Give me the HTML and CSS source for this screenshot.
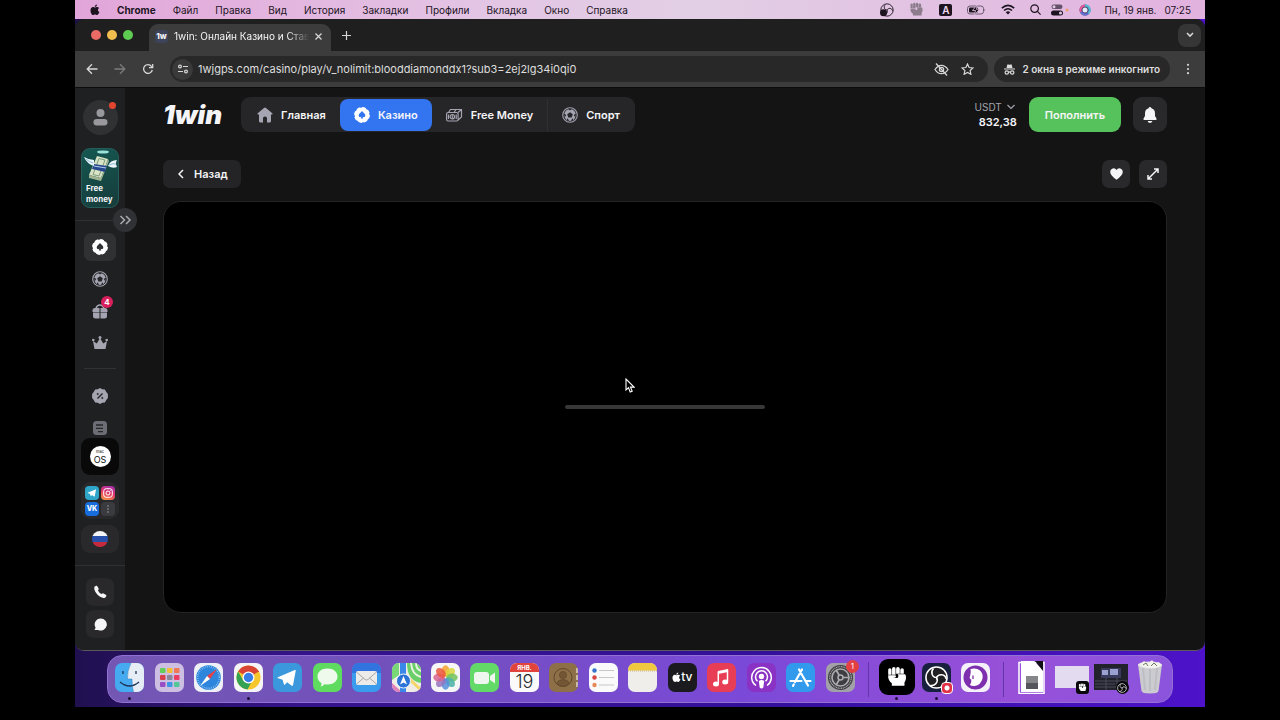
FILE: index.html
```html
<!doctype html>
<html lang="ru">
	<head>
		<meta charset="UTF-8" />
		<meta name="viewport" content="width=device-width, initial-scale=1.0" />
		<title>1win: Онлайн Казино и Ставки</title>
		<link rel="stylesheet" href="styles.css">
	</head>
	<body>
		<!-- Shared icons -->
		<svg class="sprite" aria-hidden="true">
			<symbol id="apple" viewBox="0 0 16 18">
				<path d="M11.2 0.3c.1 2-1.600 3.700-3.500 3.700C7.500 2.200 9.300.500 11.200.300zM8 5c.8 0 1.700-.9 3.300-.9 1.300 0 2.500.7 3.200 1.700-2.700 1.600-2.300 5.300.5 6.500-.7 2-2.200 4.700-3.900 4.700-1.200 0-1.600-.8-3-.8s-1.900.8-3 .8C2.900 17 .6 12.900.8 9.200 1 6.100 2.900 4.200 5 4.200 6.300 4.200 7.200 5 8 5z" />
			</symbol>
			<symbol id="chip" viewBox="0 0 16 16">
				<path fill-rule="evenodd" d="M8 .6A7.400 7.400 0 1 1 8 15.400 7.400 7.400 0 0 1 8 .6zM8 4c.8 1.700 3.300 2.300 3.300 4.500 0 1.600-1.600 2.200-2.700 1.200l.6 1.800H6.800l.6-1.800c-1.100 1-2.700.4-2.700-1.200C4.700 6.300 7.200 5.700 8 4z" />
				<circle cx="8" cy="8" r="7.300" fill="none" stroke="currentColor" stroke-width="1.200" stroke-dasharray="3.700 2.033" />
			</symbol>
			<symbol id="ball" viewBox="0 0 16 16">
				<circle cx="8" cy="8" r="7.300" fill="none" stroke="currentColor" stroke-width="1.100" />
				<circle cx="8" cy="8" r="5.900" />
				<path class="seam" d="M8 5.200l2.800 2-1.100 3.300H6.300L5.200 7.200zM6 1.800h4L8 3.400zM14 6.500l-.6 4-1.700-2.400zM2 6.500l.6 4 1.700-2.400zM4.500 13.500l.8-2.200 2 2.400zM11.500 13.500l-.8-2.200-2 2.400z" />
			</symbol>
			<symbol id="fist" viewBox="0 0 20 20">
				<path d="M2 3.500Q2 2 3.500 2T5 3.500V8H2zM5.500 2.500Q5.500 1 7.100 1t1.600 1.500V8H5.500zM9.200 2.500Q9.200 1 10.800 1t1.700 1.500V7H9.200zM13 3.500Q13 2 14.600 2t1.600 1.500V7H13zM2 8.500h6.200c1.200 0 1.200 1.700 0 1.900l-2 .2 4.200.2c1-.6 1.200-2.300.2-3.300h6.600c1.400 1 1.400 5-.4 7.400V18H5.300v-2.300C3 14.300 1.600 11.500 2 8.500z" />
			</symbol>
			<symbol id="obs" viewBox="0 0 20 20">
				<circle cx="10" cy="10" r="8.800" fill="none" stroke="currentColor" stroke-width="1.300" />
				<path fill="none" stroke="currentColor" stroke-width="1.300" d="M10 10C6 10 5 5 7.500 2.500M10 10c2-3.500 7-3 8 1M10 10c2 3.500-1.500 7.500-5 6.500" />
			</symbol>
			<symbol id="plane" viewBox="0 0 20 20">
				<path d="M18 3.200L15.500 16.300c-.2.800-.8 1-1.500.6l-3.900-3-1.900 1.900c-.4.400-1 .3-1.100-.3L6 11.600 2 10.300c-.8-.3-.8-.9.200-1.300l14.900-6.200c.6-.2 1 0 .9.400zM6.800 11.400l8.300-6-6.900 6.900-.2 2.500z" />
			</symbol>
		</svg>

		<div class="desktop">
			<header class="menubar">
				<nav class="menu" aria-label="Меню">
					<button class="menu-item" aria-label="Apple"><svg width="10" height="12"><use href="#apple" /></svg></button>
					<button class="menu-item bold">Chrome</button>
					<button class="menu-item">Файл</button>
					<button class="menu-item">Правка</button>
					<button class="menu-item">Вид</button>
					<button class="menu-item">История</button>
					<button class="menu-item">Закладки</button>
					<button class="menu-item">Профили</button>
					<button class="menu-item">Вкладка</button>
					<button class="menu-item">Окно</button>
					<button class="menu-item">Справка</button>
				</nav>
				<div class="status">
					<svg width="14" height="14" viewBox="0 0 20 20">
						<use href="#obs" width="20" height="20" />
						<circle cx="5" cy="14" r="5" />
					</svg>
					<svg class="grey" width="15" height="15"><use href="#fist" /></svg>
					<span class="layout">A</span>
					<svg width="19" height="10" viewBox="0 0 19 10">
						<rect x="0.500" y="1" width="16" height="8" rx="2.500" fill="none" stroke="#6b5a70" />
						<rect x="2" y="2.500" width="9" height="5" rx="1" />
						<path d="M17.500 3.500v3q1.500-1.500 0-3z" fill="#6b5a70" />
						<path d="M10 0L5.500 5.500h3L7.500 10l5-5.700h-3z" stroke="#dfc0df" stroke-width="0.800" />
					</svg>
					<svg width="14" height="11" viewBox="0 0 14 11" fill="none" stroke="currentColor" stroke-width="1.600">
						<path d="M.8 4.200Q7-1.600 13.200 4.200M3 6.500q4-3.500 8 0" />
						<path d="M4.800 8.200Q7 6.400 9.200 8.200L7 10.500z" fill="currentColor" stroke="none" />
					</svg>
				</div>
				<div class="status compact">
					<svg width="11" height="11" viewBox="0 0 11 11" fill="none" stroke="currentColor" stroke-width="1.200">
						<circle cx="4.600" cy="4.600" r="3.800" /><path d="M7.400 7.400l3.200 3.200" />
					</svg>
					<svg width="18" height="12" viewBox="0 0 18 12">
						<rect x="0.500" y="0.500" width="11" height="4.500" rx="2.200" fill="#65526a" /><circle cx="3" cy="2.700" r="1.500" fill="#e2c8e4" />
						<rect x="0" y="6.500" width="12" height="5" rx="2.500" /><circle cx="9.500" cy="9" r="1.500" fill="#e2c8e4" />
						<circle cx="16" cy="6" r="1.500" fill="#f0a070" />
					</svg>
					<svg width="12" height="12" viewBox="0 0 12 12" fill="none" stroke-width="2">
						<circle cx="6" cy="6" r="5.500" fill="#4a4370" />
						<path d="M2 8A4.500 4.500 0 0 1 6 1.500" stroke="#e65a9c" />
						<path d="M6 1.500A4.500 4.500 0 0 1 9 9.500" stroke="#4dbdd8" />
						<path d="M9 9.500A4.500 4.500 0 0 1 2 8" stroke="#6570d8" />
						<circle cx="6" cy="6" r="2.500" fill="#e4eafa" />
					</svg>
					<time class="clock"><span>Пн, 19 янв.</span><span>07:25</span></time>
				</div>
			</header>

			<div class="window">
				<div class="tabstrip">
					<div class="lights">
						<button class="light red" aria-label="Закрыть"></button>
						<button class="light yellow" aria-label="Свернуть"></button>
						<button class="light green" aria-label="Развернуть"></button>
					</div>
					<div class="tab">
						<span class="favicon">1w</span>
						<span class="tab-title">1win: Онлайн Казино и Став</span>
						<button class="icon-btn" aria-label="Закрыть вкладку">
							<svg width="7" height="7" viewBox="0 0 7 7" fill="none" stroke="currentColor" stroke-width="1.300"><path d="M.5.500l6 6M6.500.500l-6 6" /></svg>
						</button>
					</div>
					<button class="icon-btn new-tab" aria-label="Новая вкладка">
						<svg width="9" height="9" viewBox="0 0 9 9" fill="none" stroke="currentColor" stroke-width="1.200"><path d="M4.500 0v9M0 4.500h9" /></svg>
					</button>
					<button class="icon-btn tab-search" aria-label="Поиск вкладок">
						<svg width="8" height="6" viewBox="0 0 8 6" fill="none" stroke="currentColor" stroke-width="1.600"><path d="M1 1l3 3 3-3" /></svg>
					</button>
				</div>

				<div class="toolbar">
					<button class="icon-btn" aria-label="Назад">
						<svg width="12" height="12" viewBox="0 0 12 12" fill="none" stroke="currentColor" stroke-width="1.300"><path d="M11.500 6H1.500M6 1.200L1.200 6 6 10.800" /></svg>
					</button>
					<button class="icon-btn faded" aria-label="Вперёд">
						<svg width="12" height="12" viewBox="0 0 12 12" fill="none" stroke="currentColor" stroke-width="1.300"><path d="M.5 6h10M6 1.200L10.800 6 6 10.800" /></svg>
					</button>
					<button class="icon-btn" aria-label="Обновить">
						<svg width="12" height="12" viewBox="0 0 12 12" fill="none" stroke="currentColor" stroke-width="1.300"><path d="M10.300 7A4.400 4.400 0 1 1 9.500 3.300L10.700 4.700M10.700 1v3.700H7" /></svg>
					</button>
					<div class="omnibox">
						<button class="icon-btn site-info" aria-label="Сведения о сайте">
							<svg width="10" height="10" viewBox="0 0 10 10" fill="none" stroke="currentColor" stroke-width="1.200"><circle cx="2" cy="2.500" r="1.400" /><path d="M5 2.500h5M0 7.500h5" /><circle cx="8" cy="7.500" r="1.400" /></svg>
						</button>
						<input class="url" type="text" aria-label="Адрес" value="1wjgps.com/casino/play/v_nolimit:blooddiamonddx1?sub3=2ej2lg34i0qi0" />
						<button class="icon-btn" aria-label="Отслеживание">
							<svg width="15" height="13" viewBox="0 0 15 13" fill="none" stroke="currentColor" stroke-width="1.300"><path d="M1 6.500Q3.700 2.300 7.500 2.300T14 6.500Q11.300 10.700 7.500 10.700T1 6.500z" /><circle cx="7.500" cy="6.500" r="2.100" /><path d="M2 .5l11 12" /></svg>
						</button>
						<button class="icon-btn" aria-label="В закладки">
							<svg width="13" height="12" viewBox="0 0 13 12" fill="none" stroke="currentColor" stroke-width="1.200"><path d="M6.500 1l1.600 3.500 3.900.4-2.900 2.600.8 3.800-3.400-1.900-3.400 1.900.8-3.800L1 4.900l3.900-.4z" /></svg>
						</button>
					</div>
					<button class="incognito">
						<svg width="11" height="11" viewBox="0 0 11 11"><path d="M2.500 4l.8-3.200q.2-.6.800-.4l1.400.3L6.900.400q.6-.2.800.4L8.500 4zM0 4.600h11v1H0z" /><g fill="none" stroke="currentColor" stroke-width="1.200"><circle cx="2.800" cy="8.500" r="1.700" /><circle cx="8.200" cy="8.500" r="1.700" /><path d="M4.500 8.300q1-.8 2 0" /></g></svg>
						2 окна в режиме инкогнито
					</button>
					<button class="icon-btn kebab" aria-label="Ещё">
						<svg width="4" height="12" viewBox="0 0 4 12"><circle cx="2" cy="1.800" r="1.100" /><circle cx="2" cy="6" r="1.100" /><circle cx="2" cy="10.200" r="1.100" /></svg>
					</button>
				</div>

				<div class="page">
					<aside class="sidebar">
						<button class="avatar" aria-label="Профиль">
							<svg width="15" height="17" viewBox="0 0 15 17"><circle cx="7.500" cy="4" r="4" /><rect x="0.500" y="10" width="14" height="6.500" rx="3.200" /></svg>
							<span class="alert-dot"></span>
						</button>
						<a class="promo" href="#">
							<svg width="34" height="34" viewBox="0 0 34 34">
								<ellipse cx="20" cy="3" rx="6" ry="1.600" fill="#9ce0dc" />
								<path d="M14 7l11 3-7 19-12-3z" fill="#d9e4c6" />
								<path d="M6 26l12 3v3L6 29zM18 29l7-19 1 2-8 20z" fill="#9fb392" />
								<path d="M16 9.500l6 1.500-6 16-6-1.500z" fill="none" stroke="#7e9a7c" />
								<path d="M11 15l13 2-2 6-13-3z" fill="#27488f" />
								<path d="M11 17l12 2" stroke="#b7cdf0" />
								<path d="M11 17Q4 15 1 8q5 3 10 3zM25 17q2-6 9-6-2 3 0 7-4 2-9-1z" fill="#e8f5fb" />
								<path d="M10 14Q6 13 3 10M26 16q4-2 7-1" stroke="#91b8cf" fill="none" />
							</svg>
							<span>Free<br>money</span>
						</a>
						<div class="divider wide">
							<button class="expander" aria-label="Развернуть меню">
								<svg width="13" height="10" viewBox="0 0 13 10" fill="none" stroke="currentColor" stroke-width="1.500"><path d="M1.500 1l4 4-4 4M7 1l4 4-4 4" /></svg>
							</button>
						</div>
						<nav class="side-nav" aria-label="Разделы">
							<a class="side-link active" href="#" aria-label="Казино"><svg width="16" height="16"><use href="#chip" /></svg></a>
							<a class="side-link" href="#" aria-label="Спорт"><svg width="16" height="16"><use href="#ball" /></svg></a>
							<a class="side-link" href="#" aria-label="Бонусы">
								<svg width="16" height="16" viewBox="0 0 16 16"><path d="M.500 7.500Q.500 5 3 5h4.500v4h-7zM8.500 5H13q2.500 0 2.500 2.500V9h-7zM1 9.500h6.500v6H3.500Q1 15.500 1 13zM8.500 9.500H15V13q0 2.500-2.500 2.500h-4z" /><path d="M4 5.500Q5 2 8 2t4 3.500" fill="none" stroke="currentColor" stroke-width="1.500" /></svg>
								<span class="badge">4</span>
							</a>
							<a class="side-link" href="#" aria-label="VIP">
								<svg width="16" height="14" viewBox="0 0 16 14"><path d="M2.500 13L1 5l3.800 2.600L8 2l3.200 5.600L15 5l-1.500 8z" /><circle cx="1.300" cy="4" r="1.300" /><circle cx="8" cy="1.600" r="1.500" /><circle cx="14.700" cy="4" r="1.300" /></svg>
							</a>
							<div class="divider"></div>
							<a class="side-link" href="#" aria-label="Акции">
								<svg width="16" height="16" viewBox="0 0 16 16"><path d="M8 0l2.300 1.300 2.600.1 1.200 2.400L15.900 6v4l-1.800 2.200-1.200 2.400-2.600.1L8 16l-2.300-1.300-2.600-.1-1.200-2.400L.1 10V6l1.800-2.200 1.200-2.400 2.600-.1z" /><g fill="#26272b" stroke="#26272b"><path d="M5.500 10.500l5-5" stroke-width="1.400" /><circle cx="5.700" cy="6" r="0.600" /><circle cx="10.300" cy="10" r="0.600" /></g></svg>
							</a>
							<a class="side-link dim" href="#" aria-label="История">
								<svg width="14" height="14" viewBox="0 0 14 14"><rect width="14" height="14" rx="3.500" /><path d="M3 4h7M3 7.300h7M5 10.600h5" stroke="#26272b" stroke-width="1.300" /></svg>
							</a>
						</nav>
						<a class="mac-app" href="#" aria-label="Приложение для macOS"><span class="mac-logo"><small>mac</small><span>OS</span></span></a>
						<div class="social">
							<a class="telegram" href="#" aria-label="Telegram"><svg width="10" height="10"><use href="#plane" /></svg></a>
							<a class="instagram" href="#" aria-label="Instagram"><svg width="10" height="10" viewBox="0 0 10 10" fill="none" stroke="currentColor"><rect x="0.700" y="0.700" width="8.600" height="8.600" rx="2.500" /><circle cx="5" cy="5" r="2" /><path d="M7.300 2.500h.6" /></svg></a>
							<a class="vk" href="#">VK</a>
							<button class="more" aria-label="Ещё"><svg width="4" height="10" viewBox="0 0 4 10"><circle cx="2" cy="2" r="0.800" /><circle cx="2" cy="5" r="0.800" /><circle cx="2" cy="8" r="0.800" /></svg></button>
						</div>
						<button class="lang" aria-label="Русский"><span class="flag"></span></button>
						<div class="divider wide"></div>
						<div class="contacts">
							<button class="tile" aria-label="Позвонить">
								<svg width="14" height="14" viewBox="0 0 14 14"><path d="M1.500 1.700Q3 .200 4 .800L5.600 3.500q.4.800-.7 2 1.300 2.500 3.600 3.600 1.200-1.100 2-.7l2.700 1.600q.6 1-.9 2.500Q9.700 14.300 5 10.300.2 5.300 1.500 1.700z" /></svg>
							</button>
							<button class="tile" aria-label="Чат">
								<svg width="13" height="13" viewBox="0 0 13 13"><path d="M6.800.500a6 6 0 1 1-2.600 11.400H.500L1.600 9.700A6 6 0 0 1 6.800.500z" /></svg>
							</button>
						</div>
					</aside>

					<main class="content">
						<div class="site-header">
							<a class="logo" href="#">1win</a>
							<nav class="tabs" aria-label="Основное меню">
								<a class="tab-link" href="#">
									<svg width="16" height="16" viewBox="0 0 16 16"><path d="M8 .500q.500 0 1 .400l6.300 5.300q.6.600-.1 1.300H14V14q0 1.500-1.500 1.500H10V11q0-1.500-2-1.500T6 11v4.500H3.500Q2 15.500 2 14V7.500H.8Q.100 6.800.7 6.200L7 .9Q7.500.500 8 .500z" /></svg>
									Главная
								</a>
								<a class="tab-link active" href="#"><svg width="16" height="16"><use href="#chip" /></svg>Казино</a>
								<a class="tab-link" href="#">
									<svg width="17" height="14" viewBox="0 0 17 14" fill="none" stroke="currentColor" stroke-width="1.200"><rect x="0.600" y="4.500" width="11.500" height="8.500" rx="1.500" /><path d="M2.500 4.500l2-3h11v7.500l-3.400 3M12 4.500l3.500-3M8 4.500l2-3" /><circle cx="6.300" cy="8.700" r="2.200" /><path d="M6.300 7.200v3M2.500 6.500v4.500M10.200 6.500v4.500" /></svg>
									Free Money
								</a>
								<a class="tab-link separated" href="#"><svg width="16" height="16"><use href="#ball" /></svg>Спорт</a>
							</nav>
							<div class="account">
								<button class="balance">
									<span class="currency">USDT
										<svg width="8" height="6" viewBox="0 0 8 6" fill="none" stroke="currentColor" stroke-width="1.200"><path d="M.500 1L4 4.500 7.500 1" /></svg>
									</span>
									<span class="amount">832,38</span>
								</button>
								<button class="deposit">Пополнить</button>
								<button class="bell" aria-label="Уведомления">
									<svg width="14" height="16" viewBox="0 0 14 16"><path d="M7 0q1.200 0 1.400 1.300Q12 2.400 12 6.500V9l1.500 2.500q.5 1.500-1 1.500h-11q-1.500 0-1-1.500L2 9V6.500Q2 2.400 5.600 1.300 5.800 0 7 0zM4.500 14h5q-1 2-2.500 2t-2.500-2z" /></svg>
								</button>
							</div>
						</div>

						<div class="game-bar">
							<button class="back">
								<svg width="6" height="10" viewBox="0 0 6 10" fill="none" stroke="currentColor" stroke-width="1.500"><path d="M5 1L1 5l4 4" /></svg>
								Назад
							</button>
							<div class="game-actions">
								<button class="tile" aria-label="В избранное">
									<svg width="13" height="12" viewBox="0 0 13 12"><path d="M6.500 11.700Q.2 7.500.200 3.800A3.400 3.400 0 0 1 6.500 2a3.400 3.400 0 0 1 6.300 1.800q0 3.700-6.300 7.900z" /></svg>
								</button>
								<button class="tile" aria-label="На весь экран">
									<svg width="12" height="12" viewBox="0 0 12 12" fill="none" stroke="currentColor" stroke-width="1.500"><path d="M1.500 10.500l9-9M7 1h4v4M5 11H1V7" /></svg>
								</button>
							</div>
						</div>

						<div class="game">
							<div class="loader" role="progressbar" aria-label="Загрузка"></div>
							<svg class="cursor" width="10" height="15" viewBox="0 0 10 15"><path d="M1 1v11l2.500-2.300L5.200 14l2-.8-1.700-4.100H9z" fill="#000" stroke="#fff" stroke-width="1.100" /></svg>
						</div>
					</main>
				</div>
			</div>

			<footer class="dock">
				<button class="app running" aria-label="Finder">
					<svg class="app-icon" viewBox="0 0 29 29"><rect width="29" height="29" fill="#46aaf0" /><path d="M16 0Q12 8 12.500 16H17q0 8 1.500 13H29V0z" fill="#e7edf5" /><path d="M8 8v3M21 8v3M5 19q9.500 8 19 0" fill="none" stroke="#1c3657" stroke-width="1.300" /><path d="M16 0Q12 8 12.500 16H17q0 8 1.500 13" fill="none" stroke="#377cb5" stroke-width="0.500" /></svg>
				</button>
				<button class="app" aria-label="Launchpad">
					<svg class="app-icon" viewBox="0 0 29 29"><rect width="29" height="29" fill="#cdbfe2" /><g><rect x="5" y="5" width="5.500" height="5" rx="1" fill="#64cf58" /><rect x="12" y="5" width="5.500" height="5" rx="1" fill="#f4bd38" /><rect x="19" y="5" width="5.500" height="5" rx="1" fill="#ed7955" /><rect x="5" y="12" width="5.500" height="5" rx="1" fill="#d8404b" /><rect x="12" y="12" width="5.500" height="5" rx="1" fill="#8b8798" /><rect x="19" y="12" width="5.500" height="5" rx="1" fill="#ec3e64" /><rect x="5" y="19" width="5.500" height="5" rx="1" fill="#9a4ec5" /><rect x="12" y="19" width="5.500" height="5" rx="1" fill="#3f96e2" /><rect x="19" y="19" width="5.500" height="5" rx="1" fill="#54c797" /></g></svg>
				</button>
				<button class="app" aria-label="Safari">
					<svg class="app-icon" viewBox="0 0 29 29"><rect width="29" height="29" fill="#eef0f5" /><circle cx="14.500" cy="14.500" r="12.300" fill="#2e86dc" /><circle cx="14.500" cy="14.500" r="10.800" fill="none" stroke="#a9d6f7" stroke-width="1.500" stroke-dasharray="0.600 1.300" /><path d="M23 6L16 16l-3-3z" fill="#ea3f45" /><path d="M6 23l7-10 3 3z" fill="#fff" /></svg>
				</button>
				<button class="app running" aria-label="Chrome">
					<svg class="app-icon" viewBox="0 0 29 29"><rect width="29" height="29" fill="#f5f4f7" /><circle cx="14.500" cy="14.500" r="12" fill="#f6c62d" /><path d="M14.500 14.500L4.100 8.500a12 12 0 0 1 20.800 0z" fill="#d94435" /><path d="M14.500 8.500h10.400" stroke="#d94435" /><path d="M4.100 8.500a12 12 0 0 0 9.400 18l5-9.500-9.200.500z" fill="#35a253" /><circle cx="14.500" cy="14.500" r="6" fill="#fff" /><circle cx="14.500" cy="14.500" r="4.700" fill="#377de8" /></svg>
				</button>
				<button class="app" aria-label="Telegram">
					<svg class="app-icon" viewBox="0 0 29 29"><rect width="29" height="29" fill="#3b98dc" /><use href="#plane" x="3" y="4" width="22" height="22" /></svg>
				</button>
				<button class="app" aria-label="Сообщения">
					<svg class="app-icon" viewBox="0 0 29 29"><rect width="29" height="29" fill="#5fdc5f" /><path d="M14.500 5.500c6 0 10 3.300 10 8s-4 8-10 8q-1.500 0-3-.3-1.300 1.800-4 2.300 1.200-1.500 1-3.300-4-2.500-4-6.700c0-4.700 4-8 10-8z" fill="#edfaec" /></svg>
				</button>
				<button class="app" aria-label="Почта">
					<svg class="app-icon" viewBox="0 0 29 29"><rect width="29" height="29" fill="#3b9bed" /><rect width="29" height="10" fill="#3274df" /><rect x="4" y="8" width="21" height="14" rx="2" fill="#ecebea" /><path d="M4.500 9l8.500 7.500q1.500 1 3 0L24.500 9M4.500 21l7-6M24.500 21l-7-6" fill="none" stroke="#aaa7a4" /></svg>
				</button>
				<button class="app" aria-label="Карты">
					<svg class="app-icon" viewBox="0 0 29 29"><rect width="29" height="29" fill="#efede5" /><path d="M15 0h14v20Q15 18 15 0z" fill="#6bcf69" /><path d="M19 0q1 12 10 14M24 0q0 6 5 8" fill="none" stroke="#e7f3df" stroke-width="2" /><path d="M0 0h7v12L0 17z" fill="#79d777" /><path d="M0 20l10 9H0z" fill="#df80bd" /><path d="M8 0h6v29H8z" fill="#3987e8" /><path d="M14 13l15 14" stroke="#f4d565" stroke-width="3" /><circle cx="11.500" cy="18" r="7" fill="#2b73d6" stroke="#eef4fa" /><path d="M11.500 13l3.500 8.500-3.500-2-3.500 2z" fill="#fff" /></svg>
				</button>
				<button class="app" aria-label="Фото">
					<svg class="app-icon" viewBox="0 0 29 29"><rect width="29" height="29" fill="#f7f6f6" /><g fill-opacity="0.850"><ellipse cx="14.500" cy="8" rx="4" ry="5.700" fill="#f5a42c" /><ellipse cx="14.500" cy="8" rx="4" ry="5.700" fill="#d9d63c" transform="rotate(45 14.500 14.500)" /><ellipse cx="14.500" cy="8" rx="4" ry="5.700" fill="#72c35b" transform="rotate(90 14.500 14.500)" /><ellipse cx="14.500" cy="8" rx="4" ry="5.700" fill="#4bb1a9" transform="rotate(135 14.500 14.500)" /><ellipse cx="14.500" cy="8" rx="4" ry="5.700" fill="#5690db" transform="rotate(180 14.500 14.500)" /><ellipse cx="14.500" cy="8" rx="4" ry="5.700" fill="#9573bf" transform="rotate(225 14.500 14.500)" /><ellipse cx="14.500" cy="8" rx="4" ry="5.700" fill="#d9638f" transform="rotate(270 14.500 14.500)" /><ellipse cx="14.500" cy="8" rx="4" ry="5.700" fill="#ec583f" transform="rotate(315 14.500 14.500)" /></g></svg>
				</button>
				<button class="app" aria-label="FaceTime">
					<svg class="app-icon" viewBox="0 0 29 29"><rect width="29" height="29" fill="#63d968" /><rect x="4" y="9" width="15" height="12" rx="3" fill="#eff6ed" /><path d="M20 13l5-3.500v11L20 17z" fill="#eff6ed" /></svg>
				</button>
				<button class="app" aria-label="Календарь">
					<span class="app-icon calendar"><span class="month">ЯНВ.</span><span class="day">19</span></span>
				</button>
				<button class="app" aria-label="Контакты">
					<svg class="app-icon" viewBox="0 0 29 29"><rect width="29" height="29" fill="#8e7048" /><path d="M27 5h2v5h-2zM27 12h2v5h-2zM27 19h2v5h-2z" fill="#c9bca9" /><g fill="#735735" stroke="#60482d" stroke-width="0.700"><circle cx="14" cy="14.500" r="9" fill="none" stroke-width="1" /><circle cx="14" cy="12" r="3.600" /><path d="M7.500 20.500q1.500-4 6.500-4t6.500 4q-6.500 5.500-13 0z" /></g></svg>
				</button>
				<button class="app" aria-label="Напоминания">
					<svg class="app-icon" viewBox="0 0 29 29"><rect width="29" height="29" fill="#fafafa" /><path d="M10 7.500h15M10 14.500h15M10 22h15" stroke="#bbb" stroke-width="0.800" /><circle cx="5.500" cy="7.500" r="2.200" fill="#3573cd" /><circle cx="5.500" cy="14.500" r="2.200" fill="#d74444" /><circle cx="5.500" cy="22" r="2.200" fill="#e88a58" /></svg>
				</button>
				<button class="app" aria-label="Заметки">
					<svg class="app-icon" viewBox="0 0 29 29"><rect width="29" height="29" fill="#f0eeea" /><rect width="29" height="7.500" fill="#f0c93e" /><path d="M0 8h29" stroke="#a28b4c" stroke-dasharray="1 1" stroke-width="0.600" /></svg>
				</button>
				<button class="app" aria-label="TV">
					<span class="app-icon tv"><svg width="9" height="11"><use href="#apple" /></svg>tv</span>
				</button>
				<button class="app" aria-label="Музыка">
					<svg class="app-icon" viewBox="0 0 29 29"><rect width="29" height="29" fill="#e83e55" /><path d="M11 8l10-2v3L11 11z" /><path d="M11.300 8.500v12M20.500 6.500v12" fill="none" stroke="#fff" stroke-width="1.500" /><ellipse cx="9" cy="21" rx="3" ry="2.500" /><ellipse cx="18.200" cy="19" rx="3" ry="2.500" /></svg>
				</button>
				<button class="app" aria-label="Подкасты">
					<svg class="app-icon" viewBox="0 0 29 29"><rect width="29" height="29" fill="#8a32c4" /><g fill="none" stroke="#fff" stroke-width="1.500"><path d="M9 22.500A9.800 9.800 0 1 1 20 22.500M10.500 18.300a6 6 0 1 1 8 0" /></g><circle cx="14.500" cy="13.500" r="2.700" /><path d="M11.800 18q2.700-2 5.400 0l-.9 6.500q-1.800 2-3.600 0z" /></svg>
				</button>
				<button class="app" aria-label="App Store">
					<svg class="app-icon" viewBox="0 0 29 29"><rect width="29" height="29" fill="#329aed" /><path d="M16 6.500L9 19M7.800 21.500l-.8 1.300M13 6.500l9 16M4.500 18h11M20.500 18h4" fill="none" stroke="#fff" stroke-width="2.200" stroke-linecap="round" /></svg>
				</button>
				<button class="app" aria-label="Системные настройки">
					<svg class="app-icon" viewBox="0 0 29 29"><rect width="29" height="29" fill="#a1a1a7" /><circle cx="14.500" cy="14.500" r="12.500" fill="#3e3e42" /><g fill="none" stroke="#adadb1"><circle cx="14.500" cy="14.500" r="10.800" stroke-width="1.200" stroke-dasharray="1 0.700" /><circle cx="14.500" cy="14.500" r="8.500" stroke-width="1.600" /><circle cx="14.500" cy="14.500" r="2.500" stroke-width="1.500" /><path d="M17 14.500h6M13.200 12.300l-3-5.300M13.200 16.700l-3 5.300" stroke-width="1.700" /></g></svg>
					<span class="count">1</span>
				</button>
				<div class="dock-line"></div>
				<button class="app running" aria-label="Кулак">
					<span class="app-icon large"><svg width="22" height="22"><use href="#fist" /></svg></span>
				</button>
				<button class="app running" aria-label="OBS">
					<svg class="app-icon" viewBox="0 0 29 29"><rect width="29" height="29" fill="#17203f" /><circle cx="14.500" cy="14.500" r="11" fill="#202024" /><use href="#obs" x="2.500" y="2.500" width="24" height="24" /></svg>
					<span class="rec"></span>
				</button>
				<button class="app" aria-label="Браузер">
					<svg class="app-icon" viewBox="0 0 29 29"><rect width="29" height="29" fill="#f5f1fa" /><circle cx="14.500" cy="14.500" r="12" fill="#7e2fae" /><path d="M9.500 6q6-1.500 9.500 1.500 3.500 3.500 2.500 8-1.500 6.500-8 7.500-3 .2-4.500-1 2-2.500 1.200-5.500-2.500-1-1-4 1-3.500.3-6.500z" fill="#fff" /><path d="M12 12.500v3.500" stroke="#7e2fae" stroke-width="1.300" /></svg>
				</button>
				<div class="dock-line"></div>
				<button class="app" aria-label="Документ">
					<svg class="app-thumb" width="28" height="34" viewBox="0 0 28 34"><path d="M3 1h13l9 9v22H3z" fill="#fff" /><path d="M1 2.500h25v31H1z" fill="none" stroke="#fff" stroke-width="1.500" /><path d="M17 1h8v10z" fill="#121015" /><path d="M8 16h12v13H8z" fill="#85868a" /><path d="M8 23h12v6H8z" fill="#55565b" /></svg>
				</button>
				<button class="app" aria-label="Свёрнутое окно">
					<span class="app-thumb blank"></span>
					<span class="mini"><svg width="9" height="9"><use href="#fist" /></svg></span>
				</button>
				<button class="app" aria-label="Свёрнутое окно OBS">
					<svg class="app-thumb" width="34" height="26" viewBox="0 0 34 26"><rect width="34" height="26" fill="#22222c" /><rect x="7" y="4" width="20" height="10" fill="#393b5d" /><path d="M8 6h6v5H8zM16 5h8v6h-8z" fill="#9aa0d0" /><path d="M1 17h32M1 20h20M1 23h22M12 14v12M23 14v12" stroke="#4a4a59" /></svg>
					<span class="mini round"><svg width="10" height="10"><use href="#obs" /></svg></span>
				</button>
				<button class="app" aria-label="Корзина">
					<svg class="app-thumb" width="26" height="34" viewBox="0 0 26 34"><path d="M1 4h24l-3.500 27q-.5 2.500-8.500 2.500T4.500 31z" fill="#cbcbd0" /><path d="M6 8l2 22M13 8v23M20 8l-2 22" stroke="#bdbdc4" stroke-width="2" /><ellipse cx="13" cy="5" rx="12" ry="3.500" fill="#e5e5e8" /><path d="M3 5l4-4 4 3 4-4 3 4 4-2 2 4q-11 5-21-1z" fill="#f4f4ee" /><path d="M6 5l3-2 2 3M14 6l3-3 3 3" stroke="#6e7860" fill="none" /></svg>
				</button>
			</footer>
		</div>
	</body>
</html>
```
FILE: styles.css
```css
:root {
	--color-page: #141415;
	--color-panel: #1e2022;
	--color-tile: #29292b;
	--color-line: #303134;
	--color-chrome: #3c3c3c;
	--color-chrome-dark: #282828;
	--color-grey: #a5a4b1;
	--color-blue: #3374f0;
	--color-green: #56c25b;
	--color-white: #f5f5f7;
}

* {
	box-sizing: border-box;
}

body {
	margin: 0;
	background: #000;
	color: var(--color-white);
	font-family: Inter, 'Noto Sans', sans-serif;
	font-size: 11px;
	line-height: 16px;
}

button,
input {
	margin: 0;
	padding: 0;
	border: none;
	background: none;
	color: inherit;
	font: inherit;
}

a {
	color: inherit;
	text-decoration: none;
}

svg {
	display: block;
	flex-shrink: 0;
}

svg:not([fill]) {
	fill: currentColor;
}

.sprite {
	position: absolute;
	width: 0;
	height: 0;
}

.bold {
	font-weight: 700;
}

.grey {
	color: #8c7c8c;
}

.desktop {
	display: flex;
	flex-direction: column;
	height: calc(100vh - 13px);
	min-height: 640px;
	margin: 0 75px;
	background: linear-gradient(90deg, #20104f, #35138a 20%, #34109a 60%, #4d12c9);
}

/* Menu bar */

.menubar {
	display: flex;
	align-items: center;
	height: 19px;
	padding: 0 14px 0 15px;
	background: linear-gradient(90deg, #e2a5d9, #e3c4e4 35%, #e2cfe5 55%, #e2b2df);
	color: #1d141f;
	font-size: 10px;
}

.menu,
.status,
.clock {
	display: flex;
	align-items: center;
}

.menu {
	gap: 17px;
	margin-right: auto;
}

.menu-item {
	white-space: nowrap;
}

.status {
	gap: 15px;
}

.compact {
	gap: 10px;
	margin-left: 15px;
}

.clock {
	gap: 8px;
	margin-left: 3px;
}

.layout {
	width: 13px;
	height: 12px;
	border-radius: 2px;
	background: #1d141f;
	color: #efd9ef;
	font-size: 10px;
	line-height: 12px;
	font-weight: 600;
	text-align: center;
}

/* Browser window */

.window {
	flex: 1;
	display: flex;
	flex-direction: column;
	min-height: 0;
	border-bottom: 1px solid #5a5a5d;
	border-radius: 9px;
	background: var(--color-page);
	overflow: hidden;
}

.tabstrip {
	display: flex;
	align-items: center;
	height: 32px;
	padding: 0 4px 0 16px;
	background: #1f1f1f;
}

.lights {
	display: flex;
	gap: 6px;
	margin-right: 16px;
}

.light {
	width: 10px;
	height: 10px;
	border-radius: 50%;
}

.light.red {
	background: #ea6a66;
}

.light.yellow {
	background: #f2bd4f;
}

.light.green {
	background: #5ecb53;
}

.tab {
	display: flex;
	align-items: center;
	gap: 6px;
	align-self: flex-end;
	width: 182px;
	height: 27px;
	padding: 0 9px 3px 6px;
	border-radius: 9px 9px 0 0;
	background: var(--color-chrome);
}

.favicon {
	width: 13px;
	height: 13px;
	border-radius: 3px;
	background: #3d4359;
	font-size: 8px;
	line-height: 12px;
	font-weight: 800;
	text-align: center;
}

.tab-title {
	flex: 1;
	min-width: 0;
	overflow: hidden;
	white-space: nowrap;
	font-size: 10px;
	mask-image: linear-gradient(90deg, #000 85%, transparent);
}

.icon-btn {
	display: flex;
	align-items: center;
	justify-content: center;
	color: #d6d6d6;
}

.new-tab {
	margin-left: 11px;
}

.tab-search {
	width: 23px;
	height: 23px;
	margin-left: auto;
	border-radius: 8px;
	background: #363636;
}

.toolbar {
	display: flex;
	align-items: center;
	gap: 16px;
	height: 37px;
	padding: 0 15px 0 11px;
	border-bottom: 1px solid #0c0c0c;
	background: var(--color-chrome);
}

.faded {
	color: #7c7c7c;
}

.omnibox {
	flex: 1;
	display: flex;
	align-items: center;
	gap: 12px;
	height: 26px;
	padding: 0 14px 0 2px;
	border-radius: 13px;
	background: var(--color-chrome-dark);
}

.site-info {
	width: 21px;
	height: 21px;
	margin-right: -7px;
	border-radius: 50%;
	background: #3a3a3a;
}

.url {
	flex: 1;
	min-width: 0;
	color: #dedede;
	outline: none;
}

.incognito {
	display: flex;
	align-items: center;
	gap: 7px;
	height: 26px;
	margin-left: -10px;
	padding: 0 10px;
	border-radius: 13px;
	background: var(--color-chrome-dark);
	color: #dedede;
	font-size: 10px;
	font-weight: 600;
	white-space: nowrap;
}

/* Sidebar */

.page {
	flex: 1;
	display: flex;
	min-height: 0;
}

.sidebar {
	display: flex;
	flex-direction: column;
	align-items: center;
	width: 50px;
	padding: 12px 0;
	background: var(--color-panel);
}

.avatar {
	position: relative;
	display: flex;
	align-items: center;
	justify-content: center;
	width: 35px;
	height: 35px;
	flex-shrink: 0;
	border-radius: 50%;
	background: #303133;
	color: #99989d;
}

.alert-dot {
	position: absolute;
	top: 2px;
	right: 2px;
	width: 7px;
	height: 7px;
	border-radius: 50%;
	background: #e2452f;
}

.promo {
	display: flex;
	flex-direction: column;
	align-items: center;
	width: 38px;
	height: 60px;
	flex-shrink: 0;
	margin-top: 13px;
	border: 1px solid #265c59;
	border-radius: 9px;
	background: linear-gradient(160deg, #155751, #163c3b);
	font-size: 8px;
	line-height: 11px;
	font-weight: 700;
}

.promo span {
	align-self: flex-start;
	padding-left: 4px;
}

.divider {
	width: 32px;
	height: 1px;
	flex-shrink: 0;
	margin: 7px 0 9px;
	background: var(--color-line);
}

.divider.wide {
	position: relative;
	width: 100%;
	margin: 12px 0;
}

.expander {
	position: absolute;
	top: -12px;
	right: -12px;
	display: flex;
	align-items: center;
	justify-content: center;
	width: 24px;
	height: 24px;
	border-radius: 50%;
	background: #303134;
	color: #aaaab0;
}

.side-nav {
	flex: 1;
	display: flex;
	flex-direction: column;
	align-items: center;
	gap: 4px;
	min-height: 0;
	overflow: hidden;
}

.side-link {
	position: relative;
	display: flex;
	align-items: center;
	justify-content: center;
	width: 32px;
	height: 28px;
	flex-shrink: 0;
	border-radius: 7px;
	color: var(--color-grey);
}

.side-link.active {
	background: #303133;
	color: #fff;
}

.side-link.dim {
	color: #6d6d75;
}

.seam {
	fill: #26272b;
}

.badge {
	position: absolute;
	top: -1px;
	right: 3px;
	width: 12px;
	height: 12px;
	border-radius: 50%;
	background: #d91f5c;
	color: #fff;
	font-size: 8px;
	line-height: 12px;
	font-weight: 700;
	text-align: center;
}

.mac-app,
.social,
.lang {
	width: 38px;
	flex-shrink: 0;
	border-radius: 9px;
}

.mac-app {
	display: flex;
	align-items: center;
	justify-content: center;
	height: 37px;
	background: #09090a;
}

.mac-logo {
	display: flex;
	flex-direction: column;
	align-items: center;
	justify-content: center;
	width: 21px;
	height: 21px;
	border-radius: 50%;
	background: #fff;
	color: #111;
	font-size: 9px;
	line-height: 11px;
}

.mac-logo small {
	font-size: 4px;
	line-height: 5px;
}

.social {
	display: grid;
	grid-template-columns: 14px 14px;
	grid-auto-rows: 14px;
	gap: 2px;
	place-content: center;
	height: 37px;
	margin: 7px 0 6px;
	background: var(--color-tile);
}

.social > * {
	display: flex;
	align-items: center;
	justify-content: center;
	border-radius: 4px;
	color: #fff;
}

.telegram {
	background: #2ea6ca;
}

.instagram {
	background: linear-gradient(200deg, #9b30b9, #e23667 50%, #f6a143);
}

.vk {
	background: #176ddc;
	font-size: 7px;
	font-weight: 800;
}

.social .more {
	background: #3a3b3e;
	color: #9d9da3;
}

.lang {
	display: flex;
	align-items: center;
	justify-content: center;
	height: 28px;
	background: var(--color-tile);
}

.flag {
	width: 16px;
	height: 16px;
	border-radius: 50%;
	background: linear-gradient(#f4f4f6 34%, #2850aa 34% 67%, #c62b3d 67%);
}

.contacts {
	display: flex;
	flex-direction: column;
	gap: 4px;
	flex-shrink: 0;
}

.tile {
	display: flex;
	align-items: center;
	justify-content: center;
	width: 28px;
	height: 28px;
	border-radius: 7px;
	background: var(--color-tile);
}

/* Site */

.content {
	flex: 1;
	display: flex;
	flex-direction: column;
	min-width: 0;
	padding: 9px 38px 37px;
}

.site-header,
.account,
.tabs,
.tab-link,
.game-bar,
.game-actions {
	display: flex;
	align-items: center;
}

.logo {
	width: 78px;
	font-size: 26px;
	line-height: 32px;
	font-weight: 900;
	font-style: italic;
}

.tabs {
	height: 35px;
	padding: 0 1px 0 2px;
	border-radius: 9px;
	background: #262628;
}

.tab-link {
	gap: 8px;
	height: 32px;
	padding: 0 14px;
	border-radius: 8px;
	font-weight: 600;
	white-space: nowrap;
}

.tab-link svg {
	color: var(--color-grey);
}

.tab-link.active {
	background: var(--color-blue);
}

.tab-link.active svg {
	color: #fff;
}

.separated {
	border-left: 1px solid #303034;
	border-radius: 0;
}

.account {
	gap: 12px;
	margin-left: auto;
}

.balance {
	display: flex;
	flex-direction: column;
	align-items: flex-end;
	line-height: 15px;
}

.currency {
	display: flex;
	align-items: center;
	gap: 5px;
	padding-right: 2px;
	color: #a5a5ad;
	font-size: 10px;
}

.amount {
	font-weight: 600;
}

.deposit {
	height: 35px;
	padding: 0 16px;
	border-radius: 9px;
	background: var(--color-green);
	font-weight: 600;
}

.bell {
	display: flex;
	align-items: center;
	justify-content: center;
	width: 34px;
	height: 35px;
	border-radius: 9px;
	background: var(--color-tile);
}

.game-bar {
	justify-content: space-between;
	margin: 28px 0 13px;
}

.back {
	display: flex;
	align-items: center;
	gap: 10px;
	height: 28px;
	padding: 0 13px 0 15px;
	border-radius: 7px;
	background: #242426;
	font-weight: 600;
}

.game-actions {
	gap: 9px;
}

.game {
	position: relative;
	flex: 1;
	display: flex;
	align-items: center;
	justify-content: center;
	border: 1px solid #242426;
	border-radius: 18px;
	background: #000;
}

.loader {
	width: 20%;
	height: 4px;
	border-radius: 2px;
	background: #373737;
}

.cursor {
	position: absolute;
	top: 43%;
	left: 46%;
}

/* Dock */

.dock {
	display: flex;
	align-items: center;
	height: 48px;
	margin: 4px 32px;
	padding: 0 2px;
	border: 1px solid #9270d5;
	border-radius: 15px;
	background: linear-gradient(90deg, #7357b3, #7251bc 25%, #7b49d8 60%, #9850d8 85%, #8b54dd);
}

.app {
	position: relative;
	flex: 1;
	display: flex;
	align-items: center;
	justify-content: center;
	height: 100%;
	padding-bottom: 4px;
	color: #fff;
}

.app-icon {
	width: 29px;
	height: 29px;
	flex-shrink: 0;
	border-radius: 7px;
}

.app.running::after {
	content: '';
	position: absolute;
	bottom: 2px;
	width: 3px;
	height: 3px;
	border-radius: 50%;
	background: #1b1034;
}

.calendar {
	display: flex;
	flex-direction: column;
	align-items: center;
	background: #fafafa;
	color: #29292b;
	overflow: hidden;
}

.month {
	width: 100%;
	background: #e0443c;
	color: #fff;
	font-size: 6px;
	line-height: 9px;
	font-weight: 700;
}

.day {
	font-size: 18px;
	line-height: 19px;
	font-weight: 300;
}

.tv {
	display: flex;
	align-items: center;
	justify-content: center;
	background: #1b1b1f;
	font-size: 12px;
	font-weight: 500;
}

.large {
	display: flex;
	align-items: center;
	justify-content: center;
	width: 36px;
	height: 36px;
	border-radius: 9px;
	background: #000;
}

.count {
	position: absolute;
	top: 4px;
	right: 1px;
	width: 13px;
	height: 13px;
	border-radius: 50%;
	background: #e34044;
	font-size: 8px;
	line-height: 13px;
}

.rec {
	position: absolute;
	right: 3px;
	bottom: 8px;
	width: 12px;
	height: 12px;
	border: 1px solid #fff;
	border-radius: 4px;
	background: radial-gradient(circle, #fff 2px, #e33147 3px);
}

.dock-line {
	width: 1px;
	height: 35px;
	margin: 0 8px;
	background: #6634aa;
}

.blank {
	width: 34px;
	height: 22px;
	background: #e3dcf0;
}

.mini {
	position: absolute;
	right: 2px;
	bottom: 8px;
	display: flex;
	align-items: center;
	justify-content: center;
	width: 13px;
	height: 13px;
	border-radius: 3px;
	background: #09090b;
}

.mini.round {
	border-radius: 50%;
}
```
